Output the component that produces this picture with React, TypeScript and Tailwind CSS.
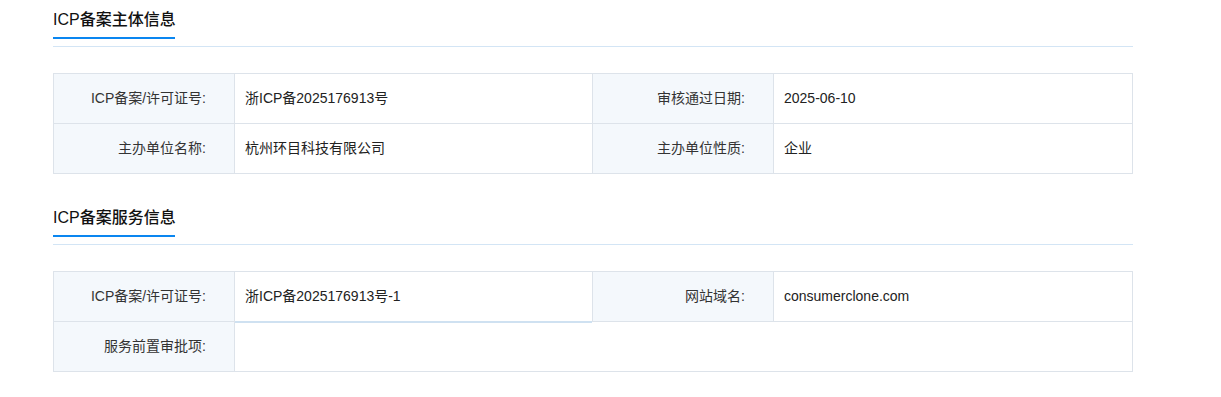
import type { ReactNode } from 'react';

interface Field {
  label: string;
  value?: string;
  wide?: boolean;
  accent?: boolean;
}

const subjectRows: Field[][] = [
  [
    { label: 'ICP备案/许可证号:', value: '浙ICP备2025176913号' },
    { label: '审核通过日期:', value: '2025-06-10' },
  ],
  [
    { label: '主办单位名称:', value: '杭州环目科技有限公司' },
    { label: '主办单位性质:', value: '企业' },
  ],
];

const serviceRows: Field[][] = [
  [
    { label: 'ICP备案/许可证号:', value: '浙ICP备2025176913号-1', accent: true },
    { label: '网站域名:', value: 'consumerclone.com' },
  ],
  [{ label: '服务前置审批项:', value: '', wide: true }],
];

function SectionTitle({ children }: { children: ReactNode }) {
  return (
    <div className="pt-[8px]">
      <span className="inline-block w-[122px] whitespace-nowrap border-b-2 border-[#0a86f0] pb-[5px] text-[16px] leading-[24px] font-medium text-[#111]">
        {children}
      </span>
      <div className="mt-[7px] h-px bg-[#d3e5f5]" />
    </div>
  );
}

function InfoTable({ rows }: { rows: Field[][] }) {
  return (
    <div className="mt-[26px] grid grid-cols-[180px_357px_180px_358px] gap-px border border-[#dde3ea] bg-[#dde3ea]">
      {rows.flatMap((row, r) =>
        row.flatMap((field, c) => [
          <div
            key={`l-${r}-${c}`}
            className="flex h-[49px] items-center justify-end bg-[#f4f8fc] pr-[28px] text-[14px] text-[#333]"
          >
            {field.label}
          </div>,
          <div
            key={`v-${r}-${c}`}
            className={`flex h-[49px] items-center bg-white pl-[10px] text-[14px] text-[#222] ${
              field.wide ? 'col-span-3' : ''
            } ${field.accent ? 'relative z-10 shadow-[0_2px_0_#cfe1f1]' : ''}`}
          >
            {field.value}
          </div>,
        ])
      )}
    </div>
  );
}

export default function App() {
  return (
    <div className="min-h-[397px] bg-white font-['Liberation_Sans','Noto_Sans_CJK_SC',sans-serif]">
      <div className="ml-[53px] w-[1080px]">
        <section>
          <SectionTitle>ICP备案主体信息</SectionTitle>
          <InfoTable rows={subjectRows} />
        </section>
        <section className="mt-[24px]">
          <SectionTitle>ICP备案服务信息</SectionTitle>
          <InfoTable rows={serviceRows} />
        </section>
      </div>
    </div>
  );
}
